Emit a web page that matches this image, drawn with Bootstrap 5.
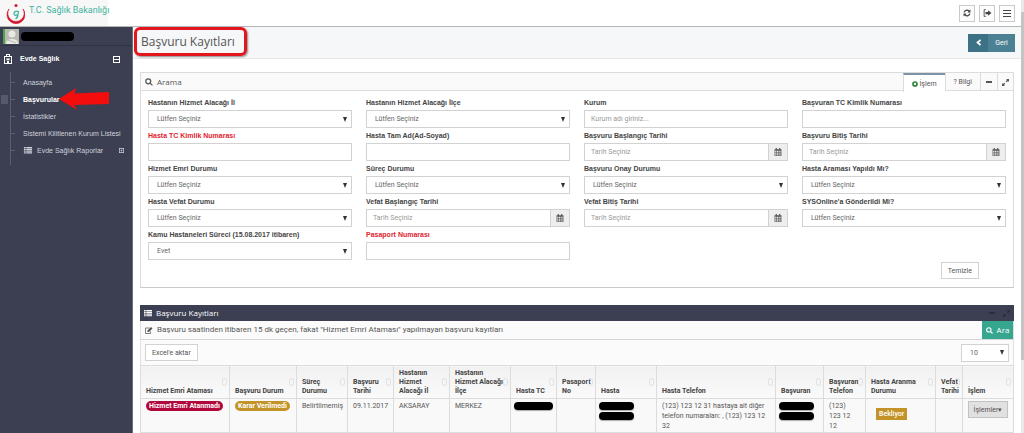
<!DOCTYPE html>
<html lang="tr">
<head>
<meta charset="utf-8">
<meta name="viewport" content="width=device-width, initial-scale=1">
<title>Başvuru Kayıtları</title>
<link href="https://cdn.jsdelivr.net/npm/bootstrap@5.3.0/dist/css/bootstrap.min.css" rel="stylesheet">
<style>
:root{--navy:#3b3f51;--line:#dcdcdc;--ui:Roboto,"Liberation Sans",sans-serif;--head:"Open Sans","Noto Sans",sans-serif}
body{font:7px/10px var(--ui);color:#555;background:#fff}
svg{display:block;fill:currentColor}
button,input,select{font:inherit;color:inherit}
.topbar{height:27px;border-bottom:1px solid #b5b5b5}
.topicons{padding-right:6px}
.brand{background:#f7f7f7;width:108px;font:9px/12px Roboto,sans-serif;color:#3fb39d;text-decoration:none}
.sqbtn{width:16px;height:17px;border:1px solid #c9c9c9;background:#fcfcfc;color:#444}
.side{width:133px;background:var(--navy);color:#d0d2dc;border-right:1px solid #6b6e7d;font-family:"Liberation Sans",sans-serif}
.side a{color:inherit;text-decoration:none;white-space:nowrap}
.userbar{height:19px;border-bottom:1px solid #2f3342;padding-left:3px;gap:2px}
.avatar{width:16px;height:15px;background:#b9b9b2;border-left:2px solid #4aa64a;color:#e9e9e4}
.hidden-name{background:#000;border-radius:4px;height:9px;width:53px;display:block}
.side a.group{height:26px;color:#fff;font-weight:700}
.tree{margin-left:10px;border-left:1px solid #5a5e70;padding:2px 0 6px}
.tree a{height:17px;padding-left:12px;position:relative}
.tree a::before{content:"";width:4px;height:1px;background:#5a5e70;margin-left:-12px;margin-right:8px}
.side a.current{color:#fff;font-weight:700}
.side a.current::after{content:"";position:absolute;left:-10px;top:4px;width:7px;height:9px;background:#55596b}
.arrow{position:absolute;left:48px;top:16px;color:#f40d0d}
.titlebar{height:32px;background:#f6f7f8;border-bottom:1px solid #e8e8e8;padding:0 6px 0 1px}
.titlebar h1{font:12px/18px var(--head);color:#555}
.ring{border:3px solid #e3151d;border-radius:6px;height:29px;padding:0 9px 0 4px;box-shadow:1px 1px 2px #888}
.back{background:#4c8093;color:#fff;height:18px;width:47px;border:0}
.back .chev{background:#3d7286;width:20px}
.content{padding:13px 7px 0}
.panel{border:1px solid var(--line);border-bottom-color:#c9c9c9}
.panel-head{height:18px;background:#fafafa;border-bottom:1px solid var(--line);font:8px/10px var(--head)}
.tabbtn{border:0;border-left:1px solid var(--line);background:transparent;font:7px/10px Roboto,sans-serif;height:18px;padding:0 8px}
.tabbtn.on{background:#fff;border-top:2px solid #7d93a8;height:19px}
.fields{--bs-gutter-x:14px;margin:0;padding-top:4px}
.fields label{display:block;font:700 7px/11px "Liberation Sans",sans-serif;height:15px;padding-top:2px;color:#444;white-space:nowrap}
.fields label.req{color:#e02430}
.ctl{height:18px;border:1px solid #d2d2d2;background:#fff;border-radius:0;width:100%;padding:0 6px;color:#666;display:block}
.ctl::placeholder{color:#999}
select.ctl{appearance:none;padding:0 8px;background:#fff url("data:image/svg+xml,%3Csvg xmlns='http://www.w3.org/2000/svg' viewBox='0 0 4 5'%3E%3Cpath d='M0 0h4L2 5z' fill='%23333'/%3E%3C/svg%3E") no-repeat right 4px center/4px 5px}
select.pagesize{width:48px}
.calbtn{width:19px;flex:none;border:1px solid #d2d2d2;border-left:0;background:#eee;color:#555}
.plain{border:1px solid #d2d2d2;background:#fff;height:17px;color:#555;padding:0 6px}
.formend{padding:2px 34px 8px 0}
.results{padding-top:17px}
.dark-head{height:16px;background:var(--navy);color:#fff;font:8px/10px var(--head)}
.ghosticon{color:#2a2d3b}
.note{height:19px;background:#fbfbfb;border-bottom:1px solid #d5d5d5;font:8px/10px var(--ui);white-space:nowrap}
.find{background:#36a78e;color:#fff;border:0;width:31px;height:18px;font:8px/10px var(--head)}
.tools{height:25px;background:#fbfbfb}
.rows{table-layout:fixed;margin:0;border-color:var(--line);background:#f9f9f9}
.rows th{height:33px;vertical-align:bottom;font-weight:700;font-size:7px;line-height:9px;padding:0 4px 2px 5px;color:#444;border:1px solid var(--line);background:linear-gradient(#f1f1f1,#fafafa);position:relative;white-space:nowrap}
.rows th::after{content:"";position:absolute;right:2px;top:12px;width:5px;height:8px;border:1px solid #e0e0e0;border-radius:3px}
.rows td{height:34px;vertical-align:top;padding:2px 2px 1px 5px;font:7px/10px var(--ui);color:#555;border:1px solid var(--line);background:#f9f9f9}
.rows td.masked{padding:3px 3px 0}
.rows th:nth-child(1){width:89px}.rows th:nth-child(2){width:67px}.rows th:nth-child(3){width:51px}
.rows th:nth-child(4){width:46px}.rows th:nth-child(5){width:56px}.rows th:nth-child(6){width:61px}
.rows th:nth-child(7){width:46px}.rows th:nth-child(8){width:39px}.rows th:nth-child(9){width:61px}
.rows th:nth-child(10){width:119px}.rows th:nth-child(11){width:48px}.rows th:nth-child(12){width:42px}
.rows th:nth-child(13){width:70px}.rows th:nth-child(14){width:27px}.rows th:nth-child(15){width:51px}
.pill{display:inline-block;border-radius:5px;color:#fff;font:700 7px/10px Roboto,sans-serif;padding:0 3px;white-space:nowrap}
.flat{border-radius:0;padding:1px 3px;margin:7px 0 0 5px;font-weight:500}
.maroon{background:#b0083c}.gold{background:#c39327}
.bar{display:block;background:#000;border-radius:4px;height:8px;box-shadow:0 1px 1px #aaa;max-width:39px}
.bar+.bar{margin-top:2px}
.bar.short{max-width:35px}
.act{height:17px;width:40px;border:1px solid #c2c2c2;background:#e1e1e1;color:#555;font:7px/10px var(--ui);padding:0;white-space:nowrap}
.scroller{width:3px;background:#e9e9e9;padding-top:12px}
.scroller span{display:block;height:348px;background:#c4c4c4}
</style>
</head>
<body>
<svg width="0" height="0" class="position-absolute">
<symbol id="cal" viewBox="0 0 14 14"><path fill-rule="evenodd" d="M1 2h2V0h2v2h4V0h2v2h2v12H1zM2 5v2h2V5zm3 0v2h2V5zm3 0v2h2V5zm3 0v2h1V5zM2 8v2h2V8zm3 0v2h2V8zm3 0v2h2V8zm3 0v2h1V8zM2 11v2h2v-2zm3 0v2h2v-2zm3 0v2h2v-2zm3 0v2h1v-2z"/></symbol>
<symbol id="mag" viewBox="0 0 14 14"><path fill="none" stroke="currentColor" stroke-width="2.2" d="M10 5.800a4.300 4.300 0 1 1-8.600 0a4.300 4.300 0 0 1 8.600 0zM9 9l4 4"/></symbol>
<symbol id="list" viewBox="0 0 14 12"><path d="M0 0h3v2H0zm4 0h10v2H4zM0 3h3v2H0zm4 0h10v2H4zM0 6h3v2H0zm4 0h10v2H4zM0 9h3v2H0zm4 0h10v2H4z"/></symbol>
<symbol id="exp" viewBox="0 0 12 12"><path d="M7 0h5v5l-1.700-1.700L8 5.600 6.400 4l2.300-2.300zM5 12H0V7l1.700 1.700L4 6.400 5.600 8l-2.300 2.300z"/></symbol>
</svg>
<div class="d-flex vh-100 overflow-hidden">
<div class="d-flex flex-column flex-grow-1 overflow-hidden">
<header class="topbar d-flex justify-content-between flex-shrink-0">
  <a href="#" class="brand d-flex">
    <svg width="21" height="22" viewBox="0 0 21 22" class="ms-1 flex-shrink-0 mt-1"><path d="M5 5A9 9 0 1 0 19 5A8.200 8.200 0 1 1 5 5z" fill="#d5152c" stroke="#d5152c" stroke-width=".6"/><circle cx="12" cy="1.500" r="1.500" fill="#d5152c"/><path d="M14 7.500c-2-1-4.500 .5-4 2.500s3 1.500 3.800 0c.4 2-.8 4-2.300 5m3-8v2.500" fill="none" stroke="#3fb39d" stroke-width="1.200"/></svg>
    <span class="pt-1 ps-1 text-nowrap">T.C. Sağlık Bakanlığı</span>
  </a>
  <div class="topicons d-flex gap-1 align-items-center">
    <button class="sqbtn p-0 d-flex align-items-center justify-content-center" aria-label="Yenile"><svg width="8" height="8" viewBox="0 0 14 14"><path d="M1 6a6 6 0 0 1 10-3.500L13 1v5H8l1.500-1.700A4 4 0 0 0 3 6zM13 8a6 6 0 0 1-10 3.500L1 13V8h5L4.500 9.700A4 4 0 0 0 11 8z"/></svg></button>
    <button class="sqbtn p-0 d-flex align-items-center justify-content-center" aria-label="Çıkış"><svg width="9" height="8" viewBox="0 0 16 14"><path d="M5 1H2v12h3" fill="none" stroke="currentColor" stroke-width="1.500"/><path d="M4.500 5H9V2l6 5-6 5V9H4.500z"/></svg></button>
    <button class="sqbtn p-0 d-flex align-items-center justify-content-center" aria-label="Menü"><svg width="8" height="7" viewBox="0 0 8 7"><path d="M0 0h8v1H0zM0 3h8v1H0zM0 6h8v1H0z"/></svg></button>
  </div>
</header>
<div class="d-flex flex-grow-1 overflow-hidden">
<nav class="side flex-shrink-0">
  <div class="userbar d-flex align-items-center"><span class="avatar"><svg width="14" height="15" viewBox="0 0 14 15"><circle cx="7" cy="5" r="3.500"/><path d="M1 15c0-4 3-5 6-5s6 1 6 5z"/><path d="M3 11l8 3" stroke="#b9b9b2"/></svg></span><span class="hidden-name"></span></div>
  <a href="#" class="group d-flex align-items-center px-1">
    <svg width="8" height="10" viewBox="0 0 8 10" class="me-2"><path fill-rule="evenodd" d="M0 2h2V0h4v2h2v8H0zm1 1v6h2V7h2v2h2V3zm1.500 1h1v1h1V4h1v2.500h-1V6h-1v.500h-1zM3 1v1h2V1z"/></svg>
    Evde Sağlık
    <svg width="7" height="7" viewBox="0 0 7 7" class="ms-auto me-2"><path fill-rule="evenodd" d="M0 0h7v7H0zm1 1v2h5V1zm0 3v2h5V4z"/></svg>
  </a>
  <div class="tree position-relative">
    <a href="#" class="d-flex align-items-center">Anasayfa</a>
    <a href="#" class="current d-flex align-items-center">Başvurular</a>
    <a href="#" class="d-flex align-items-center">İstatistikler</a>
    <a href="#" class="d-flex align-items-center">Sistemi Kilitlenen Kurum Listesi</a>
    <a href="#" class="d-flex align-items-center"><svg width="10" height="7" class="me-1"><use href="#list"/></svg>Evde Sağlık Raporlar<svg width="5" height="5" viewBox="0 0 7 7" class="ms-auto me-2"><path fill-rule="evenodd" d="M0 0h7v7H0zm1 1v5h5V1zm2 1h1v1h1v1H4v1H3V4H2V3h1z"/></svg></a>
    <svg class="arrow" width="51" height="22" viewBox="0 0 51 22"><path d="M0 11L17 0l-1.500 5.500L50 4v12l-35 1 3 5z"/></svg>
  </div>
</nav>
<main class="flex-grow-1 overflow-hidden">
  <div class="titlebar d-flex justify-content-between align-items-center">
    <div class="ring d-flex align-items-center align-self-start"><h1 class="m-0 text-nowrap">Başvuru Kayıtları</h1></div>
    <button class="back d-flex p-0 align-items-center"><span class="chev h-100 d-flex align-items-center justify-content-center"><svg width="5" height="7" viewBox="0 0 5 7"><path d="M4.500 1L1.500 3.500l3 2.500" fill="none" stroke="#fff" stroke-width="1.700"/></svg></span><span class="flex-grow-1">Geri</span></button>
  </div>
  <div class="content">
    <section class="panel">
      <div class="panel-head d-flex">
        <span class="d-flex align-items-center flex-grow-1 ps-1"><svg width="8" height="8" class="me-1"><use href="#mag"/></svg>Arama</span>
        <button class="tabbtn on d-flex align-items-center"><svg width="6" height="6" viewBox="0 0 6 6"><circle cx="3" cy="3" r="2" fill="none" stroke="#2e8540" stroke-width="1.700"/></svg>&nbsp;İşlem</button>
        <button class="tabbtn">? Bilgi</button>
        <button class="tabbtn px-1" aria-label="Küçült"><svg width="8" height="6" viewBox="0 0 8 6"><path d="M1 2h6v2H1z"/></svg></button>
        <button class="tabbtn px-1" aria-label="Genişlet"><svg width="7" height="7"><use href="#exp"/></svg></button>
      </div>
      <form>
        <div class="row row-cols-4 fields">
          <div class="col"><label for="a1">Hastanın Hizmet Alacağı İl</label><select id="a1" class="ctl"><option>Lütfen Seçiniz</option></select></div>
          <div class="col"><label for="a2">Hastanın Hizmet Alacağı İlçe</label><select id="a2" class="ctl"><option>Lütfen Seçiniz</option></select></div>
          <div class="col"><label for="a3">Kurum</label><input id="a3" class="ctl" placeholder="Kurum adı giriniz..."></div>
          <div class="col"><label for="a4">Başvuran TC Kimlik Numarası</label><input id="a4" class="ctl"></div>
          <div class="col"><label for="b1" class="req">Hasta TC Kimlik Numarası</label><input id="b1" class="ctl"></div>
          <div class="col"><label for="b2">Hasta Tam Ad(Ad-Soyad)</label><input id="b2" class="ctl"></div>
          <div class="col"><label for="b3">Başvuru Başlangıç Tarihi</label><div class="d-flex"><input id="b3" class="ctl" placeholder="Tarih Seçiniz"><button type="button" class="calbtn p-0 d-flex align-items-center justify-content-center" aria-label="Takvim"><svg width="8" height="8"><use href="#cal"/></svg></button></div></div>
          <div class="col"><label for="b4">Başvuru Bitiş Tarihi</label><div class="d-flex"><input id="b4" class="ctl" placeholder="Tarih Seçiniz"><button type="button" class="calbtn p-0 d-flex align-items-center justify-content-center" aria-label="Takvim"><svg width="8" height="8"><use href="#cal"/></svg></button></div></div>
          <div class="col"><label for="c1">Hizmet Emri Durumu</label><select id="c1" class="ctl"><option>Lütfen Seçiniz</option></select></div>
          <div class="col"><label for="c2">Süreç Durumu</label><select id="c2" class="ctl"><option>Lütfen Seçiniz</option></select></div>
          <div class="col"><label for="c3">Başvuru Onay Durumu</label><select id="c3" class="ctl"><option>Lütfen Seçiniz</option></select></div>
          <div class="col"><label for="c4">Hasta Araması Yapıldı Mı?</label><select id="c4" class="ctl"><option>Lütfen Seçiniz</option></select></div>
          <div class="col"><label for="d1">Hasta Vefat Durumu</label><select id="d1" class="ctl"><option>Lütfen Seçiniz</option></select></div>
          <div class="col"><label for="d2">Vefat Başlangıç Tarihi</label><div class="d-flex"><input id="d2" class="ctl" placeholder="Tarih Seçiniz"><button type="button" class="calbtn p-0 d-flex align-items-center justify-content-center" aria-label="Takvim"><svg width="8" height="8"><use href="#cal"/></svg></button></div></div>
          <div class="col"><label for="d3">Vefat Bitiş Tarihi</label><div class="d-flex"><input id="d3" class="ctl" placeholder="Tarih Seçiniz"><button type="button" class="calbtn p-0 d-flex align-items-center justify-content-center" aria-label="Takvim"><svg width="8" height="8"><use href="#cal"/></svg></button></div></div>
          <div class="col"><label for="d4">SYSOnline'a Gönderildi Mi?</label><select id="d4" class="ctl"><option>Lütfen Seçiniz</option></select></div>
          <div class="col"><label for="e1">Kamu Hastaneleri Süreci (15.08.2017 itibaren)</label><select id="e1" class="ctl"><option>Evet</option></select></div>
          <div class="col"><label for="e2" class="req">Pasaport Numarası</label><input id="e2" class="ctl"></div>
        </div>
        <div class="formend d-flex justify-content-end"><button type="reset" class="plain">Temizle</button></div>
      </form>
    </section>
    <section class="results">
      <div class="dark-head d-flex align-items-center px-1"><svg width="8" height="7" class="me-1"><use href="#list"/></svg><span class="flex-grow-1">Başvuru Kayıtları</span><svg width="6" height="6" viewBox="0 0 6 6" class="ghosticon me-2"><path d="M0 2h6v2H0z"/></svg><svg width="7" height="7" class="ghosticon"><use href="#exp"/></svg></div>
      <div class="border-start border-end">
      <div class="note d-flex align-items-center ps-1"><svg width="8" height="7" viewBox="0 0 16 14" class="me-1"><path d="M11 9v4H1V2h8" fill="none" stroke="currentColor" stroke-width="1.500"/><path d="M5 7l7-7 3 3-7 7H5z"/></svg><span class="flex-grow-1">Başvuru saatinden itibaren 15 dk geçen, fakat "Hizmet Emri Ataması" yapılmayan başvuru kayıtları</span><button class="find p-0 d-flex align-items-center justify-content-center"><svg width="7" height="7" class="me-1"><use href="#mag"/></svg>Ara</button></div>
      <div class="tools d-flex justify-content-between align-items-center px-1"><button class="plain">Excel'e aktar</button><select class="ctl pagesize" aria-label="Sayfa boyutu"><option>10</option></select></div>
      </div>
      <table class="table rows">
        <thead><tr><th>Hizmet Emri Ataması</th><th>Başvuru Durum</th><th>Süreç<br>Durumu</th><th>Başvuru<br>Tarihi</th><th>Hastanın<br>Hizmet<br>Alacağı İl</th><th>Hastanın<br>Hizmet Alacağı<br>İlçe</th><th>Hasta TC</th><th>Pasaport<br>No</th><th>Hasta</th><th>Hasta Telefon</th><th>Başvuran</th><th>Başvuran<br>Telefon</th><th>Hasta Aranma<br>Durumu</th><th>Vefat<br>Tarihi</th><th>İşlem</th></tr></thead>
        <tbody><tr><td><span class="pill maroon">Hizmet Emri Atanmadı</span></td><td><span class="pill gold">Karar Verilmedi</span></td><td>Belirtilmemiş</td><td>09.11.2017</td><td>AKSARAY</td><td>MERKEZ</td><td class="masked"><span class="bar"></span></td><td></td><td class="masked"><span class="bar short"></span><span class="bar short"></span></td><td>(123) 123 12 31 hastaya ait diğer telefon numaraları: , (123) 123 12 32</td><td class="masked"><span class="bar short"></span><span class="bar short"></span></td><td>(123)<br>123 12<br>12</td><td><span class="pill flat gold">Bekliyor</span></td><td></td><td><button class="act">İşlemler▾</button></td></tr></tbody>
      </table>
    </section>
  </div>
</main>
</div>
</div>
<div class="scroller flex-shrink-0"><span></span></div>
</div>
<script src="https://cdn.jsdelivr.net/npm/bootstrap@5.3.0/dist/js/bootstrap.bundle.min.js"></script>
</body>
</html>
